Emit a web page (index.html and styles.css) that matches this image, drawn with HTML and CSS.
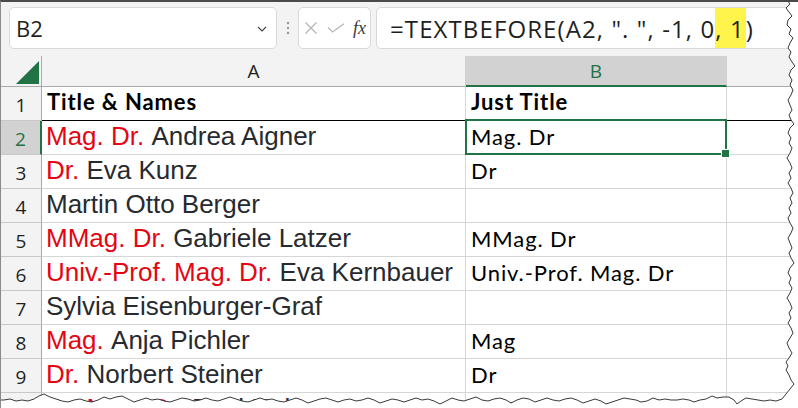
FILE: index.html
```html
<!DOCTYPE html>
<html>
<head>
<meta charset="utf-8">
<link rel="stylesheet" href="styles.css">
</head>
<body>
<div class="sheet">
  <div class="toolbar">
    <div class="namebox">
      <span class="ref">B2</span>
      <svg class="chev" width="10" height="6" viewBox="0 0 10 6"><path d="M1 1 L5 5 L9 1" fill="none" stroke="#444" stroke-width="1.2"/></svg>
    </div>
    <div class="grip">
      <svg width="4" height="14" viewBox="0 0 4 14"><circle cx="2" cy="2" r="1.2" fill="#9a9a9a"/><circle cx="2" cy="7" r="1.2" fill="#9a9a9a"/><circle cx="2" cy="12" r="1.2" fill="#9a9a9a"/></svg>
    </div>
    <div class="fxbtns">
      <svg width="14" height="12" viewBox="0 0 14 12"><path d="M1.5 0.5 L12.5 11.5 M12.5 0.5 L1.5 11.5" stroke="#b4b4b4" stroke-width="1.2" fill="none"/></svg>
      <svg width="18" height="10" viewBox="0 0 18 10"><path d="M1 4.5 L5.5 9 L17 0.8" stroke="#b4b4b4" stroke-width="1.2" fill="none"/></svg>
      <span class="fx">fx</span>
    </div>
    <div class="formula"><span>=TEXTBEFORE(A2, ". ", -1, 0</span><span class="hl">, 1</span><span>)</span></div>
  </div>

  <div class="grid">
    <div class="corner"><svg width="23" height="23" viewBox="0 0 23 23"><polygon points="23,0 23,23 0,23" fill="#217346"/></svg></div>
    <div class="colhead">A</div>
    <div class="colhead sel">B</div>
    <div class="colhead last"></div>

    <div class="rowhead">1</div>
    <div class="cell a head">Title &amp; Names</div>
    <div class="cell b head">Just Title</div>
    <div class="cell c head"></div>

    <div class="rowhead sel">2</div>
    <div class="cell a"><span class="t">Mag. Dr.</span>&nbsp;Andrea Aigner</div>
    <div class="cell b active">Mag. Dr</div>
    <div class="cell c"></div>

    <div class="rowhead">3</div>
    <div class="cell a"><span class="t">Dr.</span>&nbsp;Eva Kunz</div>
    <div class="cell b">Dr</div>
    <div class="cell c"></div>

    <div class="rowhead">4</div>
    <div class="cell a">Martin Otto Berger</div>
    <div class="cell b"></div>
    <div class="cell c"></div>

    <div class="rowhead">5</div>
    <div class="cell a"><span class="t">MMag. Dr.</span>&nbsp;Gabriele Latzer</div>
    <div class="cell b">MMag. Dr</div>
    <div class="cell c"></div>

    <div class="rowhead">6</div>
    <div class="cell a"><span class="t">Univ.-Prof. Mag. Dr.</span>&nbsp;Eva Kernbauer</div>
    <div class="cell b">Univ.-Prof. Mag. Dr</div>
    <div class="cell c"></div>

    <div class="rowhead">7</div>
    <div class="cell a">Sylvia Eisenburger-Graf</div>
    <div class="cell b"></div>
    <div class="cell c"></div>

    <div class="rowhead">8</div>
    <div class="cell a"><span class="t">Mag.</span>&nbsp;Anja Pichler</div>
    <div class="cell b">Mag</div>
    <div class="cell c"></div>

    <div class="rowhead">9</div>
    <div class="cell a"><span class="t">Dr.</span>&nbsp;Norbert Steiner</div>
    <div class="cell b">Dr</div>
    <div class="cell c"></div>

    <div class="rowhead">10</div>
    <div class="cell a"><span class="t">Dr. Mag. Dr.</span>&nbsp;Paul Huber</div>
    <div class="cell b">Dr. Mag. Dr</div>
    <div class="cell c"></div>
  </div>

  <svg class="torn" width="798" height="408" viewBox="0 0 798 408">
    <path fill="#ffffff" fill-rule="evenodd" d="M0 0 H798 V408 H0 Z M0 0 L787 0 L790 4 L786 8 L789 12 L792 16 L788 20 L787 25 L791 29 L789 34 L793 38 L790 43 L788 48 L791 52 L789 57 L792 62 L795 66 L791 70 L789 75 L792 80 L790 85 L793 90 L791 95 L788 100 L790 105 L792 110 L789 115 L791 120 L794 124 L790 128 L788 133 L791 138 L789 143 L792 148 L790 153 L787 158 L790 163 L792 168 L789 173 L791 178 L788 183 L791 188 L793 193 L790 198 L792 203 L789 208 L791 213 L788 218 L790 223 L793 228 L791 233 L788 238 L790 243 L792 248 L789 253 L791 258 L794 263 L790 268 L788 273 L791 278 L789 283 L792 288 L790 293 L787 298 L790 303 L792 308 L789 313 L791 318 L788 323 L791 328 L793 333 L790 338 L787 343 L789 348 L792 353 L789 358 L786 362 L788 366 L786 370 L789 375 L791 380 L794 384 L790 389 L786 394 L782 399 L776 401 L770 400 L764 401 L758 400 L752 399 L746 398 L741 401 L737 404 L734 400 L729 397 L723 397 L717 398 L712 396 L706 399 L700 400 L694 402 L689 400 L683 399 L677 400 L671 400 L665 399 L659 400 L653 398 L647 401 L641 402 L636 400 L630 399 L624 398 L618 400 L612 402 L606 404 L601 401 L595 399 L589 401 L583 403 L577 400 L571 398 L565 399 L559 401 L553 400 L547 398 L541 400 L535 402 L529 399 L523 398 L517 400 L511 403 L506 400 L500 398 L494 399 L488 401 L482 400 L476 397 L470 399 L464 401 L458 400 L452 398 L446 401 L440 404 L434 401 L428 399 L422 400 L416 398 L410 400 L404 402 L398 400 L392 399 L386 401 L380 403 L374 400 L368 398 L362 400 L356 401 L350 399 L344 400 L338 402 L332 400 L326 398 L320 399 L314 401 L308 403 L302 400 L296 398 L290 400 L284 402 L278 401 L272 399 L266 400 L260 398 L254 400 L248 402 L242 401 L236 399 L230 397 L224 399 L218 401 L212 400 L206 398 L200 400 L194 401 L188 399 L182 398 L176 400 L170 402 L164 401 L158 399 L152 400 L146 398 L140 400 L134 402 L128 399 L122 396 L116 397 L110 399 L104 397 L98 400 L92 402 L86 401 L80 399 L74 400 L68 402 L62 401 L56 399 L50 397 L44 394 L39 396 L34 399 L28 401 L22 400 L16 401 L10 399 L4 400 L0 400 Z"/>
    <path fill="none" stroke="#3a3a3a" stroke-width="1" d="M787 0 L790 4 L786 8 L789 12 L792 16 L788 20 L787 25 L791 29 L789 34 L793 38 L790 43 L788 48 L791 52 L789 57 L792 62 L795 66 L791 70 L789 75 L792 80 L790 85 L793 90 L791 95 L788 100 L790 105 L792 110 L789 115 L791 120 L794 124 L790 128 L788 133 L791 138 L789 143 L792 148 L790 153 L787 158 L790 163 L792 168 L789 173 L791 178 L788 183 L791 188 L793 193 L790 198 L792 203 L789 208 L791 213 L788 218 L790 223 L793 228 L791 233 L788 238 L790 243 L792 248 L789 253 L791 258 L794 263 L790 268 L788 273 L791 278 L789 283 L792 288 L790 293 L787 298 L790 303 L792 308 L789 313 L791 318 L788 323 L791 328 L793 333 L790 338 L787 343 L789 348 L792 353 L789 358 L786 362 L788 366 L786 370 L789 375 L791 380 L794 384 L790 389 L786 394 L782 399 L776 401 L770 400 L764 401 L758 400 L752 399 L746 398 L741 401 L737 404 L734 400 L729 397 L723 397 L717 398 L712 396 L706 399 L700 400 L694 402 L689 400 L683 399 L677 400 L671 400 L665 399 L659 400 L653 398 L647 401 L641 402 L636 400 L630 399 L624 398 L618 400 L612 402 L606 404 L601 401 L595 399 L589 401 L583 403 L577 400 L571 398 L565 399 L559 401 L553 400 L547 398 L541 400 L535 402 L529 399 L523 398 L517 400 L511 403 L506 400 L500 398 L494 399 L488 401 L482 400 L476 397 L470 399 L464 401 L458 400 L452 398 L446 401 L440 404 L434 401 L428 399 L422 400 L416 398 L410 400 L404 402 L398 400 L392 399 L386 401 L380 403 L374 400 L368 398 L362 400 L356 401 L350 399 L344 400 L338 402 L332 400 L326 398 L320 399 L314 401 L308 403 L302 400 L296 398 L290 400 L284 402 L278 401 L272 399 L266 400 L260 398 L254 400 L248 402 L242 401 L236 399 L230 397 L224 399 L218 401 L212 400 L206 398 L200 400 L194 401 L188 399 L182 398 L176 400 L170 402 L164 401 L158 399 L152 400 L146 398 L140 400 L134 402 L128 399 L122 396 L116 397 L110 399 L104 397 L98 400 L92 402 L86 401 L80 399 L74 400 L68 402 L62 401 L56 399 L50 397 L44 394 L39 396 L34 399 L28 401 L22 400 L16 401 L10 399 L4 400 L0 400"/>
  </svg>
</div>
</body>
</html>
```

FILE: styles.css
```css
* { box-sizing: border-box; }

html, body {
  margin: 0;
  padding: 0;
  background: #ffffff;
}

.sheet {
  position: relative;
  width: 798px;
  height: 408px;
  overflow: hidden;
  border-top: 2px solid #4a4a4a;
  border-left: 1px solid #8a8a8a;
  background: #ffffff;
}

/* ---------- formula bar ---------- */
.toolbar {
  height: 54px;
  background: #f3f3f3;
  display: flex;
  align-items: flex-start;
  padding: 5px 0 0 8px;
}

.namebox {
  width: 268px;
  height: 42px;
  background: #ffffff;
  border: 1px solid #d9d9d9;
  border-radius: 5px;
  display: flex;
  align-items: center;
  justify-content: space-between;
  padding: 0 9px 0 6px;
}

.ref {
  font-family: "Open Sans", "Noto Sans", sans-serif;
  font-size: 22px;
  color: #1f1f1f;
}

.chev { margin-top: 2px; }

.grip {
  width: 21px;
  height: 42px;
  display: flex;
  align-items: center;
  justify-content: center;
}

.fxbtns {
  width: 73px;
  height: 42px;
  background: #ffffff;
  border: 1px solid #d9d9d9;
  border-radius: 5px;
  display: flex;
  align-items: center;
  padding: 0 0 0 5px;
  gap: 9px;
}

.fx {
  font-family: "Liberation Serif", serif;
  font-style: italic;
  font-size: 18px;
  color: #3a3a3a;
  margin-left: -1px;
}

.formula {
  flex: 1;
  margin-left: 5px;
  margin-right: -20px;
  height: 42px;
  background: #ffffff;
  border: 1px solid #d9d9d9;
  border-radius: 5px 0 0 5px;
  display: flex;
  align-items: stretch;
  padding-left: 13px;
  font-family: "Open Sans", "Noto Sans", sans-serif;
  font-size: 24px;
  letter-spacing: 1.1px;
  color: #1f1f1f;
  white-space: pre;
}

.formula span {
  display: flex;
  align-items: center;
}

.formula .hl {
  background: #fff44c;
  padding: 0 1px 0 0;
}

/* ---------- grid ---------- */
.grid {
  display: grid;
  grid-template-columns: 41px 424px 261px 80px;
  grid-template-rows: 31px repeat(10, 34px);
}

.corner {
  background: #f3f3f3;
  border-right: 1px solid #a9a9a9;
  border-bottom: 1px solid #a9a9a9;
  display: flex;
  align-items: flex-end;
  justify-content: flex-end;
  padding: 0 2px 2px 0;
}

.colhead {
  background: #f3f3f3;
  border-right: 1px solid #d0d0d0;
  border-bottom: 1px solid #a9a9a9;
  display: flex;
  align-items: center;
  justify-content: center;
  font-family: "Open Sans", "Noto Sans", sans-serif;
  font-size: 19px;
  color: #1f1f1f;
}

.colhead.sel {
  background: #d2d2d2;
  color: #217346;
  border-bottom: 2px solid #217346;
}

.colhead.last { border-right: none; }

.rowhead {
  background: #f3f3f3;
  border-right: 1px solid #a9a9a9;
  border-bottom: 1px solid #c8c8c8;
  display: flex;
  align-items: center;
  justify-content: center;
  padding-top: 3px;
  font-family: "Open Sans", "Noto Sans", sans-serif;
  font-size: 19px;
  color: #1f1f1f;
}

.rowhead.sel {
  background: #d2d2d2;
  color: #217346;
  border-right: 2px solid #217346;
}

.cell {
  border-right: 1px solid #d6d6d6;
  border-bottom: 1px solid #d6d6d6;
  display: flex;
  align-items: flex-end;
  white-space: nowrap;
  overflow: visible;
}

.cell.a {
  font-family: "Liberation Sans", Arial, sans-serif;
  font-size: 26px;
  line-height: 28px;
  color: #272a2e;
  padding: 0 0 4px 4px;
}

.cell.a .t { color: #e30613; }

.cell.b {
  font-family: Lato, "Liberation Sans", sans-serif;
  font-size: 22px;
  letter-spacing: 0.9px;
  line-height: 28px;
  color: #000000;
  padding: 0 0 3px 5px;
}

.cell.c { border-right: none; }

.cell.head {
  border-bottom: 1px solid #000000;
  font-family: Lato, "Liberation Sans", sans-serif;
  font-weight: 700;
  font-size: 22px;
  letter-spacing: 0.9px;
  color: #000000;
  padding-bottom: 4px;
}

.cell.a.head { padding-left: 5px; }

.cell.active {
  position: relative;
}

.cell.active::before {
  content: "";
  position: absolute;
  left: -1px;
  top: -2px;
  right: -1px;
  bottom: -1px;
  border: 2px solid #217346;
}

.cell.active::after {
  content: "";
  position: absolute;
  right: -4px;
  bottom: -4px;
  width: 7px;
  height: 7px;
  background: #217346;
  border: 1px solid #ffffff;
}

/* ---------- torn edge ---------- */
.torn {
  position: absolute;
  left: -1px;
  top: -2px;
  pointer-events: none;
}
```
